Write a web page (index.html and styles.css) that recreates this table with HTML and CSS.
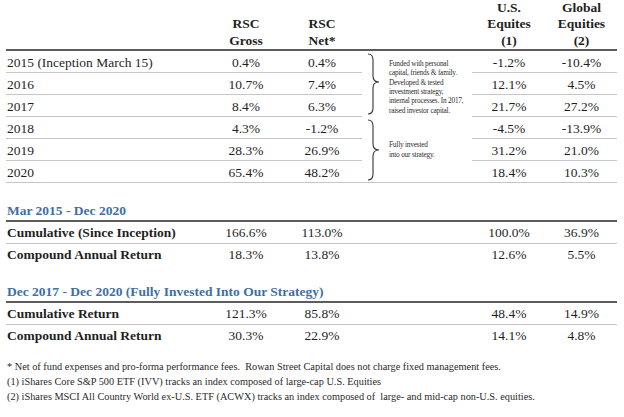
FILE: index.html
```html
<!DOCTYPE html>
<html>
<head>
<meta charset="utf-8">
<link rel="stylesheet" href="styles.css">
</head>
<body>
<div class="page">
  <div class="tbl yearly">
    <div class="h"></div>
    <div class="h">RSC<br>Gross</div>
    <div class="h">RSC<br>Net*</div>
    <div class="h"></div>
    <div class="h">U.S.<br>Equites<br>(1)</div>
    <div class="h">Global<br>Equities<br>(2)</div>

    <div class="cell c1">2015 (Inception March 15)</div>
    <div class="cell num c2">0.4%</div>
    <div class="cell num c3">0.4%</div>
    <div class="note note-a">
      <svg class="brace" width="13" height="62" viewBox="0 0 13 62"><path d="M1 1 Q6 1 6 7 L6 23 Q6 29 12 29 Q6 29 6 35 L6 55 Q6 61 1 61" fill="none" stroke="#333333" stroke-width="1.1"/></svg>
      <div class="note-text">Funded with personal<br>capital, friends &amp; family.<br>Developed &amp; tested<br>investment strategy,<br>internal processes. In 2017,<br>raised investor capital.</div>
    </div>
    <div class="cell num c5">-1.2%</div>
    <div class="cell num c6">-10.4%</div>

    <div class="cell c1">2016</div>
    <div class="cell num c2">10.7%</div>
    <div class="cell num c3">7.4%</div>
    <div class="cell num c5">12.1%</div>
    <div class="cell num c6">4.5%</div>

    <div class="cell c1">2017</div>
    <div class="cell num c2">8.4%</div>
    <div class="cell num c3">6.3%</div>
    <div class="cell num c5">21.7%</div>
    <div class="cell num c6">27.2%</div>

    <div class="cell c1">2018</div>
    <div class="cell num c2">4.3%</div>
    <div class="cell num c3">-1.2%</div>
    <div class="note note-b">
      <svg class="brace" width="13" height="62" viewBox="0 0 13 62"><path d="M1 1 Q6 1 6 7 L6 25 Q6 31 12 31 Q6 31 6 37 L6 55 Q6 61 1 61" fill="none" stroke="#333333" stroke-width="1.1"/></svg>
      <div class="note-text">Fully invested<br>into our strategy.</div>
    </div>
    <div class="cell num c5">-4.5%</div>
    <div class="cell num c6">-13.9%</div>

    <div class="cell c1">2019</div>
    <div class="cell num c2">28.3%</div>
    <div class="cell num c3">26.9%</div>
    <div class="cell num c5">31.2%</div>
    <div class="cell num c6">21.0%</div>

    <div class="cell c1">2020</div>
    <div class="cell num c2">65.4%</div>
    <div class="cell num c3">48.2%</div>
    <div class="cell num c5">18.4%</div>
    <div class="cell num c6">10.3%</div>
  </div>

  <div class="section sec-1">
    <div class="sec-title">Mar 2015 - Dec 2020</div>
    <div class="tbl sec-grid">
      <div class="cell lab-b">Cumulative (Since Inception)</div>
      <div class="cell num">166.6%</div>
      <div class="cell num">113.0%</div>
      <div class="cell"></div>
      <div class="cell num">100.0%</div>
      <div class="cell num">36.9%</div>

      <div class="cell last lab-b">Compound Annual Return</div>
      <div class="cell last num">18.3%</div>
      <div class="cell last num">13.8%</div>
      <div class="cell last"></div>
      <div class="cell last num">12.6%</div>
      <div class="cell last num">5.5%</div>
    </div>
  </div>

  <div class="section sec-2">
    <div class="sec-title">Dec 2017 - Dec 2020 (Fully Invested Into Our Strategy)</div>
    <div class="tbl sec-grid">
      <div class="cell lab-b">Cumulative Return</div>
      <div class="cell num">121.3%</div>
      <div class="cell num">85.8%</div>
      <div class="cell"></div>
      <div class="cell num">48.4%</div>
      <div class="cell num">14.9%</div>

      <div class="cell last lab-b">Compound Annual Return</div>
      <div class="cell last num">30.3%</div>
      <div class="cell last num">22.9%</div>
      <div class="cell last"></div>
      <div class="cell last num">14.1%</div>
      <div class="cell last num">4.8%</div>
    </div>
  </div>

  <div class="footnotes">
    <p>* Net of fund expenses and pro-forma performance fees.&nbsp; Rowan Street Capital does not charge fixed management fees.</p>
    <p>(1) iShares Core S&amp;P 500 ETF (IVV) tracks an index composed of large-cap U.S. Equities</p>
    <p>(2) iShares MSCI All Country World ex-U.S. ETF (ACWX) tracks an index composed of&nbsp; large- and mid-cap non-U.S. equities.</p>
  </div>
</div>
</body>
</html>
```

FILE: styles.css
```css
* { box-sizing: border-box; }

body {
  margin: 0;
  background: #ffffff;
  color: #1f1f1f;
  font-family: "Liberation Serif", "Times New Roman", serif;
}

.page {
  margin-left: 6px;
  width: 611px;
}

.tbl {
  display: grid;
  grid-template-columns: 204px 72px 80px 110px 74px 71px;
}

.yearly {
  grid-template-rows: 51px repeat(6, 22px);
}

.h {
  font-weight: bold;
  font-size: 13.5px;
  line-height: 16.5px;
  text-align: center;
  border-bottom: 2px solid #5c5c5c;
  display: flex;
  flex-direction: column;
  justify-content: flex-end;
}

.cell {
  font-size: 13.5px;
  line-height: 18px;
  padding-top: 3px;
  border-bottom: 1px solid #c6c6c6;
  white-space: nowrap;
}

.c1 { grid-column: 1; padding-left: 1px; }
.c2 { grid-column: 2; }
.c3 { grid-column: 3; }
.c5 { grid-column: 5; }
.c6 { grid-column: 6; }

.num { text-align: center; }

.note {
  grid-column: 4;
  grid-row: span 3;
  display: flex;
  align-items: center;
  padding-left: 5px;
  gap: 9px;
}

.note-b {
  border-bottom: 1px solid #c6c6c6;
}

.brace {
  flex: none;
  display: block;
}

.note-text {
  font-size: 7.3px;
  line-height: 9.3px;
  letter-spacing: -0.2px;
  color: #2e2e2e;
  white-space: nowrap;
}

.note-a .note-text { margin-top: 6px; }

.sec-1 { margin-top: 17px; }
.sec-2 { margin-top: 15px; }

.sec-title {
  color: #3e6fa6;
  font-weight: bold;
  font-size: 13.5px;
  line-height: 18px;
  padding-top: 2px;
  padding-left: 1px;
  height: 22px;
  border-bottom: 2px solid #5c5c5c;
}

.sec-grid {
  grid-template-rows: 22px 22px;
}

.sec-grid .cell {
  padding-top: 2px;
}

.cell.last {
  border-bottom: none;
}

.lab-b {
  font-weight: bold;
  padding-left: 1px;
}

.footnotes {
  margin-top: 12px;
  font-size: 10.3px;
  line-height: 15px;
  color: #2a2a2a;
}

.footnotes p {
  margin: 0;
  padding-left: 1px;
  white-space: nowrap;
}
```
